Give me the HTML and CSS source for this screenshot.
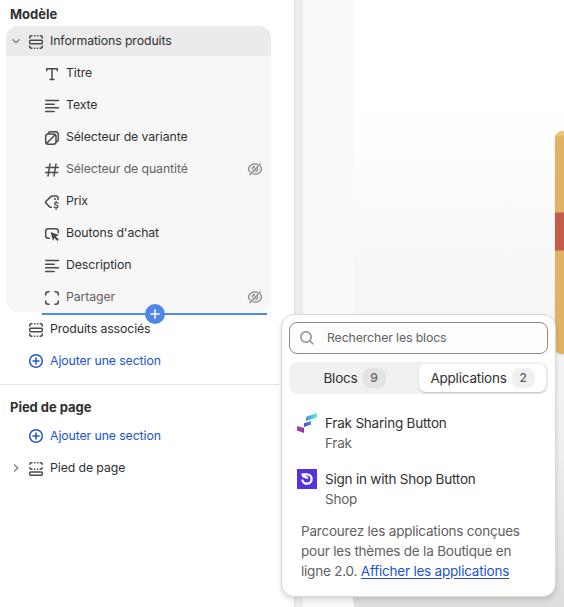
FILE: index.html
```html
<!DOCTYPE html>
<html lang="fr">
<head>
<meta charset="utf-8">
<title>Modèle</title>
<link rel="stylesheet" href="styles.css">
</head>
<body>
<svg class="defs" width="0" height="0">
  <symbol id="section" viewBox="0 0 16 16"><path stroke-linecap="butt" d="M1.700 4.500V3.700Q1.700 1.700 3.700 1.700h.8M6 1.700h1.500M8.900 1.700h1.500M11.700 1.700h.6q2 0 2 2v.8M1.700 11.500v.8q0 2 2 2h.8M6 14.300h1.500M8.900 14.300h1.500M11.700 14.300h.6q2 0 2-2v-.8"/><rect x="1.700" y="6.200" width="12.600" height="3.600" rx="1"/></symbol>
  <symbol id="footer" viewBox="0 0 16 16"><path stroke-linecap="butt" d="M1.700 3.700Q1.700 1.700 3.700 1.700h.8M6 1.700h1.500M8.900 1.700h1.500M11.700 1.700h.6q2 0 2 2M1.700 6.200q0 2 2 2h.8M6 8.200h1.500M8.900 8.200h1.500M11.700 8.200h.6q2 0 2-2"/><rect x="1.700" y="10.900" width="12.600" height="3.400" rx="1"/></symbol>
  <symbol id="hidden" viewBox="0 0 16 16"><path d="M10.800 3.500Q9.500 2.900 8 2.900C4.300 2.900 1.500 5.700 1.500 8q0 1.700 2 3.300M5.700 12.700q1.100.4 2.300.4c3.700 0 6.500-2.800 6.500-5.100q0-1.500-1.400-2.900M2.700 14 13.500 2.500M5.400 8.600Q5.200 5.800 8 5.500M10.600 7.500Q10.900 10.200 8.200 10.500M6.500 10l3.800-4"/></symbol>
  <symbol id="align" viewBox="0 0 16 16"><path d="M1.700 2.500h12.800M1.700 6.200h8.500M1.700 9.800h12.800M1.700 13.400h8.500"/></symbol>
  <symbol id="add" viewBox="0 0 16 16"><circle cx="8" cy="8" r="6.300"/><path d="M8 5v6M5 8h6"/></symbol>
</svg>
<div class="editor">
  <aside class="sidebar">
    <h2>Modèle</h2>
    <div class="group">
      <div class="row head"><svg class="chev" viewBox="0 0 10 10"><path d="m1.500 3.200 3.500 3.500 3.500-3.500"/></svg><svg class="icon"><use href="#section"/></svg><span>Informations produits</span></div>
      <div class="row block"><svg class="icon" viewBox="0 0 16 16"><path d="M2.700 4.700V2.700h10.600v2M8 2.700v10.800M6 13.500h4"/></svg><span>Titre</span></div>
      <div class="row block"><svg class="icon"><use href="#align"/></svg><span>Texte</span></div>
      <div class="row block"><svg class="icon" viewBox="0 0 16 16"><rect x="1.700" y="4" width="10.300" height="10.300" rx="2.500"/><path d="M4.200 3.300Q4.700 1.700 6.500 1.700h5q2.800 0 2.800 2.800v5q0 1.800-1.700 2.300M3 13l8-8"/></svg><span>Sélecteur de variante</span></div>
      <div class="row block muted"><svg class="icon" viewBox="0 0 16 16"><path d="M6 2 4 14M12 2l-2 12M2.200 5.500h12M1.700 10.500h12"/></svg><span>Sélecteur de quantité</span><svg class="eye"><use href="#hidden"/></svg></div>
      <div class="row block"><svg class="icon" viewBox="0 0 16 16"><path d="M14 5.500V4Q14 1.900 11.900 1.900H8.500q-1 0-1.700.7L2.100 7.200q-1 1 0 2l3.400 3.500q.8.800 1.800.6"/><circle class="dot" cx="11" cy="4.900" r="1"/><path stroke-width="1.300" d="M14 9.100q-.8-.6-1.900-.5c-1.900.2-1.800 2 0 2.500 2.200.5 2.500 2.400.2 2.700q-1.500.1-2.300-.9M12.100 7.300v1.300M12.100 13.800v1.500"/></svg><span>Prix</span></div>
      <div class="row block"><svg class="icon" viewBox="0 0 16 16"><path d="M5.300 12.200H4.500Q1.700 12.200 1.700 9.400V5.500Q1.700 2.700 4.500 2.700h7q2.800 0 2.800 2.800v1.200"/><path class="fill" d="m6.500 6 8.500 3.100-3.200 1.500 3 3-1.400 1.400-3-3L9 15z"/></svg><span>Boutons d'achat</span></div>
      <div class="row block"><svg class="icon"><use href="#align"/></svg><span>Description</span></div>
      <div class="row block muted"><svg class="icon" viewBox="0 0 16 16"><path d="M1.700 5V4.200Q1.700 1.700 4.200 1.700H5M11 1.700h.8q2.500 0 2.500 2.500V5M14.300 11v.8q0 2.500-2.500 2.500H11M5 14.300h-.8q-2.500 0-2.500-2.500V11"/></svg><span>Partager</span><svg class="eye"><use href="#hidden"/></svg></div>
      <div class="insert"><svg viewBox="0 0 20 20"><circle cx="10" cy="10" r="10"/><path d="M10 5.300v9.400M5.300 10h9.400"/></svg></div>
    </div>
    <div class="row top"><svg class="icon"><use href="#section"/></svg><span>Produits associés</span></div>
    <div class="row top link"><svg class="icon"><use href="#add"/></svg><span>Ajouter une section</span></div>
    <div class="divider"></div>
    <h2>Pied de page</h2>
    <div class="row top link"><svg class="icon"><use href="#add"/></svg><span>Ajouter une section</span></div>
    <div class="row foot"><svg class="chev" viewBox="0 0 10 10"><path d="m3.200 1.500 3.500 3.500-3.500 3.500"/></svg><svg class="icon"><use href="#footer"/></svg><span>Pied de page</span></div>
  </aside>
  <div class="gutter"></div>
  <main class="preview"><div class="photo"><div class="product"></div></div></main>
</div>
<section class="popup">
  <div class="search"><svg viewBox="0 0 16 16"><circle cx="7" cy="7" r="5.200"/><path d="m11 11 3.300 3.300"/></svg><span>Rechercher les blocs</span></div>
  <div class="tabs"><div class="tab"><span>Blocs</span><b>9</b></div><div class="tab active"><span>Applications</span><b>2</b></div></div>
  <div class="app"><svg viewBox="0 0 20 20"><defs><linearGradient id="g1"><stop stop-color="#4a8fdf"/><stop offset="1" stop-color="#68eed2"/></linearGradient><linearGradient id="g2"><stop stop-color="#6b43bb"/><stop offset="1" stop-color="#498ddd"/></linearGradient><linearGradient id="g3"><stop stop-color="#b23d9d"/><stop offset="1" stop-color="#8b36a8"/></linearGradient></defs><path fill="url(#g1)" d="M9 5.300Q9 3.500 11 3l9-3v4.600L9 8z"/><path fill="url(#g2)" d="M7 10.200 14 8v3.700L7 14z"/><path fill="url(#g3)" d="m0 13 7 2v5l-7-2.500z"/></svg><div><p>Frak Sharing Button</p><p class="sub">Frak</p></div></div>
  <div class="app"><svg viewBox="0 0 20 20"><rect width="20" height="20" fill="#5433df"/><path d="M5.400 4.500Q5.600 7.900 8.800 8.200q1.500.2 1.500 1.500M6.300 5.300h3.500a4.700 4.700 0 1 1-4.500 5.400" fill="none" stroke="#fff" stroke-width="2.300"/></svg><div><p>Sign in with Shop Button</p><p class="sub">Shop</p></div></div>
  <p class="note">Parcourez les applications conçues<br>pour les thèmes de la Boutique en<br>ligne 2.0. <a href="#">Afficher les applications</a></p>
</section>
</body>
</html>
```
FILE: styles.css
```css
* { box-sizing: border-box; }
body { margin: 0; width: 564px; height: 607px; overflow: hidden; position: relative; font-family: Inter, sans-serif; color: #303030; background: #fff; }
h2, p { margin: 0; }
svg { flex: none; display: block; }
.defs { position: absolute; }
.editor { display: flex; height: 607px; }
.sidebar { width: 294px; font-size: 12.3px; letter-spacing: -.1px; }
h2 { font-size: 13px; font-weight: 650; line-height: 20px; padding: 4px 10px 2px; letter-spacing: -.03px; }
.group { position: relative; margin-left: 6px; width: 265px; height: 286px; border-radius: 12px; background: #f7f7f7; margin-bottom: 1px; }
.row { display: flex; align-items: center; height: 32px; }
.row span { padding-bottom: 2px; }
.row.head { height: 30px; padding-left: 5px; margin-bottom: 1px; background: #ebebeb; border-radius: 12px 12px 0 0; }
.row.block { padding: 0 8px 0 38px; }
.row.top { padding-left: 28px; }
.row.foot { padding-left: 11px; }
.chev { width: 10px; height: 10px; margin-right: 7px; fill: none; stroke: #8a8a8a; stroke-width: 1.5; }
.icon { width: 16px; height: 16px; margin-right: 6px; position: relative; top: 1px; fill: none; stroke: #4a4a4a; stroke-width: 1.5; stroke-linecap: round; stroke-linejoin: round; }
.icon .fill, .icon .dot { fill: #4a4a4a; stroke: none; }
.eye { width: 16px; height: 16px; margin-left: auto; fill: none; stroke: #8a8a8a; stroke-width: 1.4; }
.muted { color: #616161; }
.link { color: #2054cd; }
.link .icon { stroke: #2054cd; top: 0; }
.insert { position: absolute; left: 36px; top: 287px; width: 225px; height: 2px; background: #4f86ea; }
.insert svg { position: absolute; left: 103px; top: -9px; width: 20px; height: 20px; fill: #4f86ea; }
.insert path { stroke: #fff; stroke-width: 1.5; }
.divider { width: 279px; height: 1px; background: #e3e3e3; margin: 7px 0 8px; }
.divider + h2 { padding-bottom: 3px; }
.gutter { width: 9px; background: linear-gradient(90deg, #e3e3e3 0 1px, #efefef 2px, #ebebeb); }
.preview { flex: 1; padding-left: 50px; background: #fafaf8; }
.photo { height: 607px; background: linear-gradient(#fff 100px, #f6f6f6 310px, #efefee 450px, #dfdddb 600px); border-bottom-left-radius: 4px; padding: 131px 0 0 202.5px; }
.product { width: 9px; height: 223px; border-radius: 7px 0 0 7px; background: linear-gradient(#edc779 0 4px, #dfb264 6px 81px, #c45c4c 82px 119px, #dfb264 120px); box-shadow: 0 1px 2px #0002; }
.popup { position: absolute; left: 281px; top: 314px; width: 275px; height: 283px; background: #fff; border: 1px solid #d8d8d8; border-radius: 13px; padding: 7px; box-shadow: 0 3px 5px #0002; font-size: 13.5px; letter-spacing: -.21px; line-height: 20px; }
.search { display: flex; align-items: center; gap: 12px; height: 32px; padding-left: 9px; border: 1px solid #8a8a8a; border-radius: 8px; background: #fdfdfd; color: #616161; font-size: 12.3px; letter-spacing: -.12px; }
.search svg { width: 16px; height: 16px; fill: none; stroke: #8a8a8a; stroke-width: 1.5; }
.tabs { display: flex; margin-top: 8px; height: 32px; padding: 2px; background: #f1f1f1; border-radius: 8px; }
.tab { display: flex; flex: 1; align-items: center; justify-content: center; gap: 5px; }
.tab.active { background: #fff; border-radius: 7px; box-shadow: 0 1px 2px #0003; margin-left: 1px; }
.tab b { width: 23px; height: 20px; border-radius: 8px; background: #e3e3e3; color: #616161; text-align: center; font-size: 12px; font-weight: 450; }
.tab.active b { background: #f0f0f0; }
.app { display: flex; gap: 8px; height: 56px; padding: 0 8px; }
.tabs + .app { margin-top: 19px; }
.app svg { width: 20px; height: 20px; }
.sub { color: #616161; }
.note { padding-left: 12px; margin-top: -4px; color: #616161; white-space: nowrap; }
.note a { color: #2054cd; text-underline-offset: 2px; }
```
